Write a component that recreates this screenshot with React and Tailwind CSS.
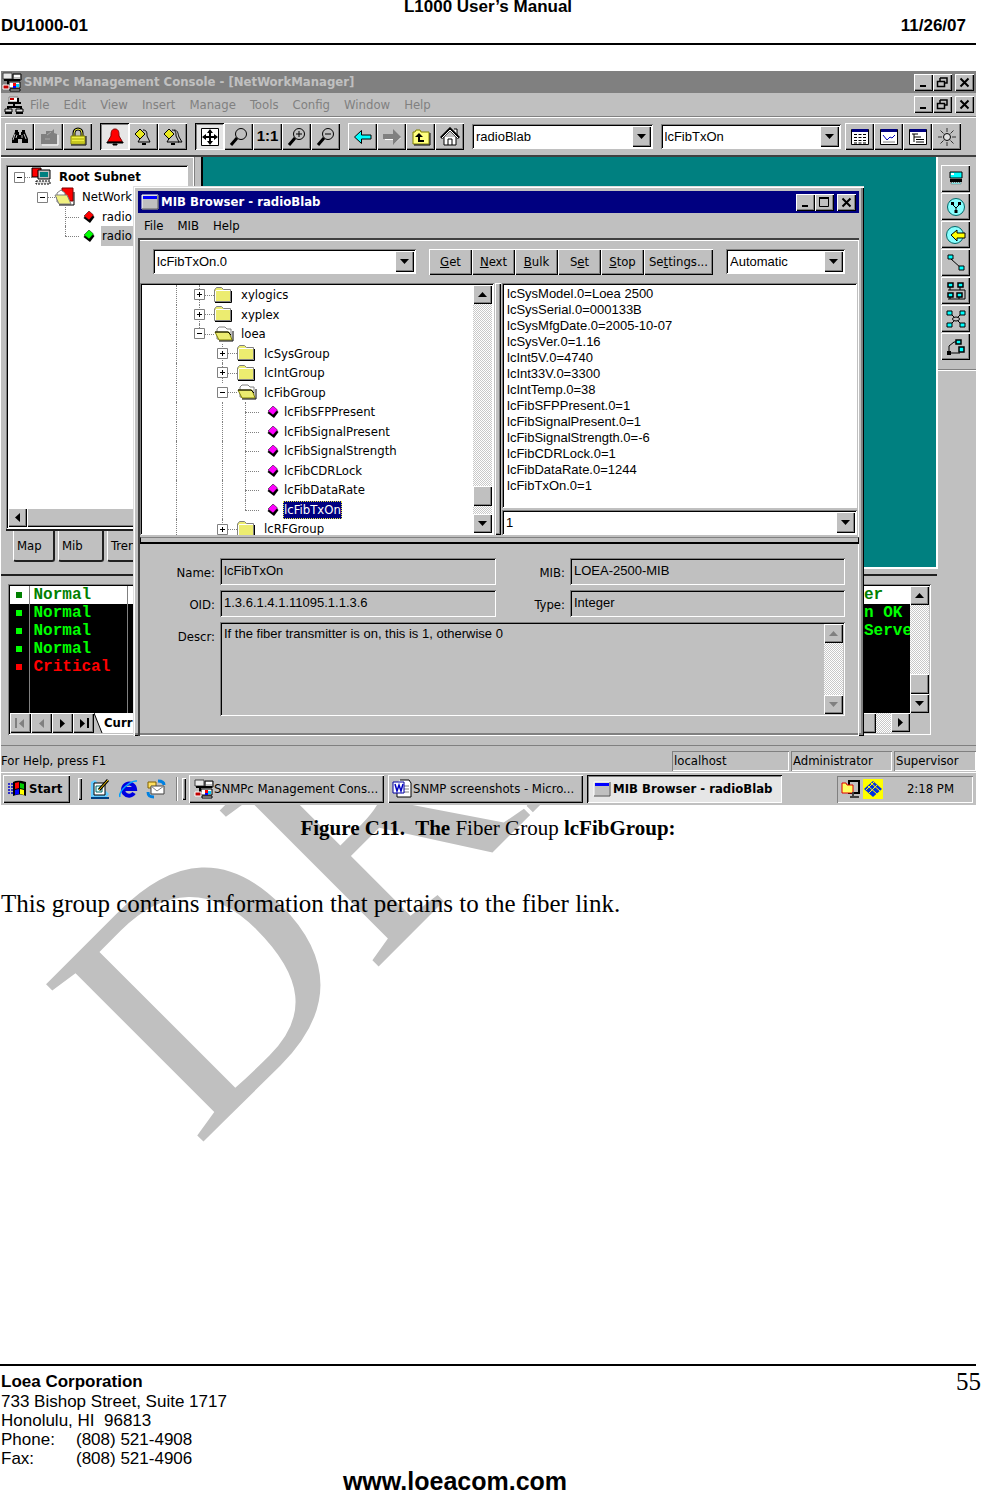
import React from 'react';

const UI = "font-['DejaVu_Sans_Condensed','Noto_Sans',sans-serif]";
const SANS = "font-['Liberation_Sans',Arial,sans-serif]";
const RAISED = 'bg-[#c0c0c0] shadow-[inset_1px_1px_0_#fff,inset_-1px_-1px_0_#000,inset_-2px_-2px_0_#808080]';
const SUNKEN = 'shadow-[inset_1px_1px_0_#808080,inset_-1px_-1px_0_#fff,inset_2px_2px_0_#000]';
const THIN_SUNKEN = 'shadow-[inset_1px_1px_0_#808080,inset_-1px_-1px_0_#fff]';
const PRESSED = 'bg-[#e6e6e6] shadow-[inset_1px_1px_0_#000,inset_-1px_-1px_0_#fff,inset_2px_2px_0_#808080]';
const TRACK = 'bg-[repeating-conic-gradient(#fff_0_25%,#c8c8c8_0_50%)] bg-[length:2px_2px]';

function Svg({ children, w = 20, h = 20, vb }) {
  return (
    <svg aria-hidden="true" width={w} height={h} viewBox={vb || `0 0 ${w} ${h}`} fill="none" className="block shrink-0">
      {children}
    </svg>
  );
}

/* ---------- icons ---------- */
const AppIcon = () => (
  <Svg>
    <path d="M1 1h9v6H1z" fill="#e8e8e8" stroke="#404040" />
    <path d="M11 2h8v6h-8z" fill="#c0c0c0" stroke="#000" />
    <path d="M12 3h6v2h-6z" fill="#fff" />
    <path d="M2 8h16M6 8v5" stroke="#000" strokeWidth="2" />
    <path d="M7 10h11v6H7z" fill="#fff" stroke="#000" />
    <path d="M11 11h3v3h-3z" fill="#f00" /><path d="M14 12h3v3h-3z" fill="#0cf" /><path d="M11 14h3v2h-3z" fill="#00f" />
    <path d="M1 13h6v4H1z" fill="#c00000" stroke="#fff" />
    <path d="M8 17h10v2H8z" fill="#ddd" stroke="#000" />
  </Svg>
);
const NetIcon = () => (
  <Svg>
    <path d="M5 2h9v5H5z" fill="#fff" stroke="#808080" />
    <path d="M4 8h13M10 8v5M4 14v-2h13v2" stroke="#000" strokeWidth="2" />
    <path d="M1 14h7v3H1zM12 14h7v3h-7z" fill="#ddd" stroke="#000" />
    <path d="M1 18h7M12 18h7M14 3v5" stroke="#000" strokeWidth="2" />
    <path d="M6 4h4" stroke="#c00000" strokeWidth="2" />
  </Svg>
);
const Binoc = () => (
  <Svg>
    <path d="M5 3h3v2h1v3h2V5h1V3h3v2l3 7v4h-6v-4H8v4H2v-4l3-7z" fill="#000" />
    <path d="M5 7l-2 6M7 8l-1 3M14 7l2 5M12 8v3" stroke="#c0c0c0" />
  </Svg>
);
const Discover = () => (
  <Svg><path d="M2 7h5V4h6l2-2v4l3 1v10H2z" fill="#808080" /><path d="M8 8l4-3M6 12h5" stroke="#a8a8a8" /><path d="M3 18h16V8" stroke="#fff" /></Svg>
);
const LockIcon = () => (
  <Svg>
    <path d="M6 9V6a4 4 0 0 1 8 0v3" stroke="#000" strokeWidth="3" /><path d="M6 9V6a4 4 0 0 1 8 0v3" stroke="#e8e840" />
    <path d="M3 9h14v8H3z" fill="#f0f040" stroke="#808000" /><path d="M4 12h12M4 15h12" stroke="#a0a000" /><path d="M3 18h15V9" stroke="#000" />
  </Svg>
);
const BELL = 'M10 2c-4 0-4 4-4 7l-3 5v1h14v-1l-3-5c0-3 0-7-4-7z';
const BellRed = () => (
  <Svg><path d={BELL} fill="#f00" stroke="#800000" /><path d="M2 15h16v1H2zM8 17h4v1H8z" fill="#000" stroke="#000" /></Svg>
);
const BellYellow = ({ two }) => (
  <Svg>
    {two && <path d="M11 3c4 0 4 4 5 7l3 5h-4" stroke="#000" />}
    <path d="M9 3c4 0 4 3 4 6l3 6H4l3-5" fill="#c0c0c0" stroke="#000" /><path d="M8 17h4" stroke="#000" strokeWidth="2" />
    <path d="M6 2l5 5-5 5-5-5z" fill="#e8e820" stroke="#000" />
  </Svg>
);
const Fit = () => (
  <Svg>
    <path d="M1.500 1.500h17v17h-17z" fill="#fff" stroke="#000" /><path d="M10 4v12M4 10h12" stroke="#000" strokeWidth="2" />
    <path d="M10 2l3 4H7zM10 18l3-4H7zM2 10l4-3v6zM18 10l-4-3v6z" fill="#000" />
  </Svg>
);
const Mag = ({ sign }) => (
  <Svg>
    <circle cx="12" cy="7" r="5.500" stroke="#000" /><path d="M8 11l-6 7" stroke="#000" strokeWidth="3" />
    {sign && <path d="M9 7h6" stroke="#000" />}{sign === '+' && <path d="M12 4v6" stroke="#000" />}
  </Svg>
);
const ArrowL = () => <Svg><path d="M1.500 10l7-6.500V8H18v4H8.500v4.500z" fill="#0ff" stroke="#000" /></Svg>;
const ArrowR = () => <Svg><path d="M19 11l-7-6v4H3v4h9v4z" fill="#fff" /><path d="M19 10l-8-8v5H1v5h10v6z" fill="#808080" /></Svg>;
const FolderUp = () => (
  <Svg><path d="M2 5h2l1-2h4l1 2h8v12H2z" fill="#ffff80" stroke="#808000" /><path d="M3 18h16V6" stroke="#000" /><path d="M13 14H8V9" stroke="#000" strokeWidth="2" /><path d="M8 6l4 4H4z" fill="#000" /></Svg>
);
const HomeIcon = () => (
  <Svg><path d="M4 10v8h12v-8" fill="#fff" stroke="#000" /><path d="M14 2h3v6" fill="#fff" stroke="#000" /><path d="M1 11l9-9 9 9" stroke="#000" strokeWidth="3" /><path d="M2 11l8-8 8 8" stroke="#fff" /><path d="M8 18v-6h4v6" stroke="#000" /></Svg>
);
const WinFrame = ({ children }) => (
  <Svg><path d="M1.500 2.500h17v15h-17z" fill="#fff" stroke="#000" /><path d="M2 2h16v3H2z" fill="#000080" />{children}</Svg>
);
const TableIcon = () => <WinFrame><path d="M4 7.500h3M8.500 7.500h3M13 7.500h3M4 10.500h3M8.500 10.500h3M13 10.500h3M4 13.500h3M8.500 13.500h3M13 13.500h3M4 16h3M8.500 16h3M13 16h3" stroke="#000" /></WinFrame>;
const GraphIcon = () => <WinFrame><path d="M4 8l4 5 3-3 2 1 3-3" stroke="#0000c0" /><path d="M4 15h12" stroke="#808080" /></WinFrame>;
const ListIcon = () => <WinFrame><path d="M4 7h6M6 10h7M8 12.500h8M8 15h8M6 7v8" stroke="#000" /></WinFrame>;
const SunIcon = () => (
  <Svg><circle cx="10" cy="10" r="3.500" fill="#e0e0e0" stroke="#000" /><path d="M10 1v4M10 15v4M1 10h4M15 10h4M3.500 3.500l3 3M13.500 13.500l3 3M16.500 3.500l-3 3M6.500 13.500l-3 3" stroke="#333" /></Svg>
);
const PcIcon = () => <Svg><path d="M4 3h12v6H4z" fill="#0ff" stroke="#000" /><path d="M5 4h3v2H5z" fill="#fff" /><path d="M4 10h12v3H4z" fill="#000" /><path d="M5 13.500h10v1.500H5z" fill="#8ff" stroke="#666" strokeDasharray="1 1" /></Svg>;
const Globe = () => <Svg><circle cx="10" cy="10" r="8.500" fill="#8ff" stroke="#066" /><path d="M5 5h3v3H5zM12 5h3v3h-3zM8.500 13h3v3h-3z" fill="#000" /><path d="M7 8l3 3 3-3M10 10v4" stroke="#000" /></Svg>;
const GlobeArrow = () => <Svg><circle cx="9" cy="10" r="8.500" fill="#8ff" stroke="#066" /><path d="M5 10l6-5v3h8v5h-8v3z" fill="#ff0" stroke="#000" /></Svg>;
const LinkIcon = () => <Svg><path d="M5 6l10 9" stroke="#000" /><path d="M2 2h5v4H2zM13 13h5v4h-5z" fill="#0ff" stroke="#000" /></Svg>;
const Bus = () => <Svg><path d="M4 6v3M14 6v3M2 9h17v9H2M4 15v3M13 15v3" stroke="#000" /><path d="M2 2h5v4H2zM12 2h5v4h-5zM2 12h5v4H2zM11 12h5v4h-5z" fill="#0ff" stroke="#000" strokeWidth="1.500" /></Svg>;
const Star = () => <Svg><path d="M4 4l12 12M16 4L4 16" stroke="#000" /><ellipse cx="10" cy="10" rx="3.500" ry="2" fill="#c0c0c0" stroke="#000" /><path d="M1 2h5v4H1zM14 2h5v4h-5zM1 14h5v4H1zM14 14h5v4h-5z" fill="#0ff" stroke="#000" /></Svg>;
const Ring = () => <Svg><path d="M3 16V9l5-4h5M4 16h10" stroke="#000" /><path d="M10 3h5v4h-5zM13 10h5v5h-5z" fill="#0ff" stroke="#000" strokeWidth="1.500" /><path d="M1 14h4v4H1z" fill="#000" /></Svg>;

const FolderClosed = () => (
  <Svg w={18} h={16}>
    <path d="M.5 14.500V3l2-2.500h5l2 2h7v12z" fill="#ecec70" stroke="#808080" /><path d="M2 3.500h14M1.500 4v10" stroke="#fff" /><path d="M1 15.500h16.500V4" stroke="#000" />
  </Svg>
);
const FolderOpen = () => (
  <Svg w={20} h={16}>
    <path d="M3 13V3l2-2h6l2 2h4v10z" fill="#fff" stroke="#808080" /><path d="M1 6h14l3 8H5z" fill="#ecec70" stroke="#808000" /><path d="M1 6h13l3 3M5 15h14V5" stroke="#000" />
  </Svg>
);
const Diamond = ({ color }) => (
  <Svg w={12} h={12}><path d="M6 1l5.500 5L7 12 .5 7z" fill="#000" /><path d="M6 0l4.500 4L6 9 1 5z" fill={color} stroke="#000" strokeWidth=".5" /></Svg>
);
const WindowIcon = () => (
  <Svg w={18} h={16}><path d="M1 1h16v14H1z" fill="#c0c0c0" stroke="#fff" /><path d="M2 2h14v3H2z" fill="#00f" /><path d="M1 15h16V1" stroke="#404040" /></Svg>
);
const Tri = ({ dir, color = '#000' }) => {
  const d = { down: 'M0 2h9l-4.500 5z', up: 'M0 7h9L4.500 2z', left: 'M7 0v9L2 4.500z', right: 'M2 0v9l5-4.500z' }[dir];
  return <Svg w={9} h={9}><path d={d} fill={color} /></Svg>;
};

/* ---------- controls ---------- */
function ToolButton({ label, pressed, children }) {
  return (
    <button type="button" aria-label={label} className={`flex h-[27px] w-[29px] items-center justify-center ${pressed ? PRESSED : RAISED}`}>
      {children}
    </button>
  );
}
function Combo({ label, value, className = '', font = SANS }) {
  return (
    <div className={`relative flex h-[25px] bg-white ${SUNKEN} ${className}`}>
      <select aria-label={label} className={`w-full appearance-none bg-transparent pl-1 text-[13px] text-black ${font}`}>
        <option>{value}</option>
      </select>
      <span className={`pointer-events-none absolute inset-y-[2px] right-[2px] flex w-[19px] items-center justify-center ${RAISED}`}>
        <Tri dir="down" />
      </span>
    </div>
  );
}
function CaptionButtons({ middle }) {
  const b = `flex h-[17px] w-[19px] items-center justify-center ${RAISED}`;
  return (
    <div className="ml-auto flex">
      <button type="button" aria-label="Minimize" className={b}><Svg w={13} h={11}><path d="M3 9h6" stroke="#000" strokeWidth="2" /></Svg></button>
      <button type="button" aria-label={middle} className={`mr-[3px] ${b}`}>
        {middle === 'Restore' ? (
          <Svg w={13} h={11}><path d="M4 1h7v5H9M4 1v3M1.500 4.500h7v5h-7z" stroke="#000" strokeWidth="1.500" /></Svg>
        ) : (
          <Svg w={13} h={11}><path d="M1.500 1.500h9v8h-9z" stroke="#000" /><path d="M1 1h10" stroke="#000" strokeWidth="2" /></Svg>
        )}
      </button>
      <button type="button" aria-label="Close" className={b}><Svg w={13} h={11}><path d="M2.500 1.500l8 8M10.500 1.500l-8 8" stroke="#000" strokeWidth="2" /></Svg></button>
    </div>
  );
}
function ScrollButton({ dir, label, muted }) {
  return (
    <button type="button" aria-label={label} className={`flex h-[19px] w-[19px] shrink-0 items-center justify-center ${RAISED}`}>
      <Tri dir={dir} color={muted ? '#808080' : '#000'} />
    </button>
  );
}
function VScroll({ thumb, gap, muted }) {
  return (
    <div className={`flex w-[19px] shrink-0 flex-col ${TRACK}`}>
      <ScrollButton dir="up" label="Scroll up" muted={muted} />
      <div className="flex-1" />
      {thumb && <div className={`h-[20px] ${RAISED}`} />}
      {gap && <div className="h-[8px]" />}
      <ScrollButton dir="down" label="Scroll down" muted={muted} />
    </div>
  );
}

/* ---------- trees ---------- */
function Guide({ kind }) {
  const v = 'absolute left-[11px] w-px border-l border-dotted border-[#808080]';
  const h = 'absolute top-1/2 border-t border-dotted border-[#808080]';
  const box = kind === '+' || kind === '-' || kind === 'm';
  return (
    <span className="relative h-full w-[23px] shrink-0">
      {(kind === '|' || kind === '+' || kind === 't') && <span className={`${v} inset-y-0`} />}
      {(kind === '-' || kind === 'l') && <span className={`${v} top-0 h-1/2`} />}
      {(kind === 't' || kind === 'l') && <span className={`${h} left-[11px] right-[-2px]`} />}
      {box && <span className={`${h} left-[17px] right-[-3px]`} />}
      {box && (
        <span className="absolute inset-0 flex items-center justify-center">
          <Svg w={11} h={11}>
            <path d="M.5.5h10v10H.5z" fill="#fff" stroke="#808080" /><path d="M3 5.500h5" stroke="#000" />
            {kind === '+' && <path d="M5.500 3v5" stroke="#000" />}
          </Svg>
        </span>
      )}
    </span>
  );
}
const mibTree = [
  ['|+', 'closed', 'xylogics'], ['|+', 'closed', 'xyplex'], ['|-', 'open', 'loea'],
  ['| +', 'closed', 'lcSysGroup'], ['| +', 'closed', 'lcIntGroup'], ['| +', 'open', 'lcFibGroup'],
  ['| |t', 'leaf', 'lcFibSFPPresent'], ['| |t', 'leaf', 'lcFibSignalPresent'], ['| |t', 'leaf', 'lcFibSignalStrength'],
  ['| |t', 'leaf', 'lcFibCDRLock'], ['| |t', 'leaf', 'lcFibDataRate'], ['| |l', 'leaf', 'lcFibTxOn', true],
  ['| +', 'closed', 'lcRFGroup'],
];
function MibRow({ row }) {
  const [guides, icon, name, selected] = row;
  const marks = [...guides].map((g, i) => (icon === 'open' && g === '+' ? (i === 2 ? 'm' : '-') : g));
  return (
    <li className="flex items-center">
      {marks.map((g, i) => <Guide key={i} kind={g} />)}
      {icon === 'leaf' ? (
        <span className="flex w-[26px] shrink-0 justify-end pr-1"><Diamond color="#f0f" /></span>
      ) : (
        <span className="flex w-[29px] shrink-0 pl-[3px]">{icon === 'open' ? <FolderOpen /> : <FolderClosed />}</span>
      )}
      <span className={selected ? 'bg-[#000080] px-px leading-[18px] text-white outline-1 -outline-offset-1 outline-dotted outline-[#e8e840]' : 'px-px'}>{name}</span>
    </li>
  );
}

const values = [
  'lcSysModel.0=Loea 2500', 'lcSysSerial.0=000133B', 'lcSysMfgDate.0=2005-10-07', 'lcSysVer.0=1.16', 'lcInt5V.0=4740',
  'lcInt33V.0=3300', 'lcIntTemp.0=38', 'lcFibSFPPresent.0=1', 'lcFibSignalPresent.0=1', 'lcFibSignalStrength.0=-6',
  'lcFibCDRLock.0=1', 'lcFibDataRate.0=1244', 'lcFibTxOn.0=1',
];
const verbs = [['', 'G', 'et'], ['', 'N', 'ext'], ['', 'B', 'ulk'], ['S', 'e', 't'], ['', 'S', 'top'], ['Se', 't', 'tings...']];

function Field({ id, label, value, labelWidth }) {
  return (
    <div className="flex h-[27px]">
      <label htmlFor={id} className={`${labelWidth} shrink-0 pr-[5px] pt-[6px] text-right text-[13px] leading-[18px] ${UI}`}>{label}</label>
      <input id={id} readOnly value={value} className={`h-[27px] w-full min-w-0 flex-1 px-1 pb-[3px] text-[13px] ${SANS} ${SUNKEN}`} />
    </div>
  );
}

function MibBrowser() {
  return (
    <section aria-label="MIB Browser" className="absolute bottom-[69px] left-[132px] right-[112px] top-[115px] flex flex-col bg-[#c0c0c0] px-[5px] pt-[5px] shadow-[inset_1px_1px_0_#dfdfdf,inset_2px_2px_0_#fff,inset_-1px_-1px_0_#000,inset_-3px_-3px_0_#808080]">
      <div className="flex h-[22px] items-center gap-[2px] bg-[#000080] pl-[3px] pr-[3px]">
        <WindowIcon />
        <h2 className={`text-[13px] font-bold text-white ${UI}`}>MIB Browser - radioBlab</h2>
        <CaptionButtons middle="Maximize" />
      </div>
      <nav className={`flex h-[25px] items-center gap-[14px] pl-[6px] text-[13px] ${UI}`}>
        {['File', 'MIB', 'Help'].map((m) => <button type="button" key={m}>{m}</button>)}
      </nav>
      <div className="flex flex-1 flex-col border-l-2 border-t-2 border-[#404040] pb-[5px] shadow-[inset_0_1px_0_#fff,inset_-1px_-1px_0_#fff]">
        <div className="flex h-[43px] items-center gap-[13px] pl-[13px] pr-[14px]">
          <Combo label="Variable" value="lcFibTxOn.0" className="flex-1" />
          <div className="flex">
            {verbs.map(([a, u, b]) => (
              <button type="button" key={a + u + b} className={`h-[26px] text-[13px] ${UI} ${RAISED} ${b === 'tings...' ? 'w-[69px]' : 'w-[43px]'}`}>{a}<u>{u}</u>{b}</button>
            ))}
          </div>
          <Combo label="Format" value="Automatic" className="w-[119px]" />
        </div>
        <div className="flex h-[252px] pr-[2px]">
          <div className={`flex w-[354px] overflow-hidden bg-white p-[2px] ${SUNKEN}`}>
            <ul className={`grid h-[254px] flex-1 auto-rows-fr pl-[23px] text-[13px] ${UI}`}>
              {mibTree.map((r) => <MibRow key={r[2]} row={r} />)}
            </ul>
            <VScroll thumb gap />
          </div>
          <div className={`mx-px w-[6px] ${RAISED}`} />
          <div className="flex flex-1 flex-col gap-[2px]">
            <ul className={`flex-1 bg-white pl-[5px] pt-[3px] text-[13px] leading-[16px] ${SANS} ${SUNKEN}`}>
              {values.map((v) => <li key={v}>{v}</li>)}
            </ul>
            <Combo label="Value" value="1" />
          </div>
        </div>
        <div className="mb-[14px] mt-[2px] h-[7px] border border-b-2 border-black border-t-[#808080] bg-[#c0c0c0]" />
        <div className="flex flex-col gap-[5px] pr-[14px]">
          <div className="grid grid-cols-[355fr_348fr]">
            <Field id="f-name" label="Name:" value="lcFibTxOn" labelWidth="w-[80px]" />
            <Field id="f-mib" label="MIB:" value="LOEA-2500-MIB" labelWidth="w-[74px]" />
          </div>
          <div className="grid grid-cols-[355fr_348fr]">
            <Field id="f-oid" label="OID:" value="1.3.6.1.4.1.11095.1.1.3.6" labelWidth="w-[80px]" />
            <Field id="f-type" label="Type:" value="Integer" labelWidth="w-[74px]" />
          </div>
          <div className="flex h-[94px]">
            <label htmlFor="f-descr" className={`w-[80px] shrink-0 pr-[5px] pt-[6px] text-right text-[13px] leading-[18px] ${UI}`}>Descr:</label>
            <div className={`flex flex-1 p-[2px] ${SUNKEN}`}>
              <textarea id="f-descr" readOnly value="If the fiber transmitter is on, this is 1, otherwise 0" className={`flex-1 resize-none overflow-hidden px-[2px] text-[13px] leading-[20px] ${SANS}`} />
              <VScroll muted />
            </div>
          </div>
        </div>
      </div>
    </section>
  );
}

const log = [
  ['Normal', 'er', 'bg-white text-[#008000]'], ['Normal', 'n OK', 'text-[#00ff00]'], ['Normal', 'Serve', 'text-[#00ff00]'],
  ['Normal', '', 'text-[#00ff00]'], ['Critical', '', 'text-[#ff0000]'],
];

function Console() {
  return (
    <div className="relative ml-px bg-[#c0c0c0] text-black">
      <div className="flex h-[22px] items-center bg-[#808080] pl-px pr-[2px]">
        <AppIcon />
        <h1 className={`ml-[2px] text-[13px] font-bold text-[#c0c0c0] ${UI}`}>SNMPc Management Console - [NetWorkManager]</h1>
        <CaptionButtons middle="Restore" />
      </div>
      <div className="flex h-[24px] items-center border-b border-[#808080] pl-[3px] pr-[2px]">
        <NetIcon />
        <nav className={`flex gap-[14px] pl-[6px] text-[13px] text-[#808080] ${UI}`}>
          {['File', 'Edit', 'View', 'Insert', 'Manage', 'Tools', 'Config', 'Window', 'Help'].map((m) => <button type="button" key={m}>{m}</button>)}
        </nav>
        <CaptionButtons middle="Restore" />
      </div>
      <div className="flex h-[38px] items-center gap-2 border-t border-white pl-1 pr-[15px]">
        <div className="flex"><ToolButton label="Find"><Binoc /></ToolButton><ToolButton label="Discover"><Discover /></ToolButton><ToolButton label="Lock"><LockIcon /></ToolButton></div>
        <div className="flex"><ToolButton label="Alarms" pressed><BellRed /></ToolButton><ToolButton label="Acknowledge"><BellYellow /></ToolButton><ToolButton label="Acknowledge all"><BellYellow two /></ToolButton></div>
        <div className="flex">
          <ToolButton label="Fit" pressed><Fit /></ToolButton><ToolButton label="Zoom"><Mag /></ToolButton>
          <ToolButton label="Actual size"><b className={`text-[15px] ${SANS}`}>1:1</b></ToolButton>
          <ToolButton label="Zoom in"><Mag sign="+" /></ToolButton><ToolButton label="Zoom out"><Mag sign="-" /></ToolButton>
        </div>
        <div className="flex"><ToolButton label="Back"><ArrowL /></ToolButton><ToolButton label="Forward"><ArrowR /></ToolButton><ToolButton label="Parent"><FolderUp /></ToolButton><ToolButton label="Home"><HomeIcon /></ToolButton></div>
        <Combo label="Node" value="radioBlab" className="flex-1" />
        <Combo label="Table" value="lcFibTxOn" className="flex-1" />
        <div className="-ml-1 flex"><ToolButton label="Table view"><TableIcon /></ToolButton><ToolButton label="Graph view"><GraphIcon /></ToolButton><ToolButton label="List view"><ListIcon /></ToolButton><ToolButton label="Poll"><SunIcon /></ToolButton></div>
      </div>

      <div className="flex h-[414px] border-t-2 border-[#404040]">
        <div className="flex w-[193px] flex-col pl-[5px] pr-[6px] pt-[8px] shadow-[inset_0_1px_0_#fff,inset_-1px_0_0_#fff]">
          <div className={`flex h-[364px] flex-col bg-white p-[2px] ${SUNKEN}`}>
            <ul className={`flex-1 text-[13px] leading-[20px] ${UI}`}>
              <li className="flex h-5 items-center font-bold">
                <Guide kind="m" />
                <Svg w={22}><path d="M1 1h9v9H1z" fill="#f00" stroke="#000" /><path d="M7 3h12v9H7z" fill="#c0c0c0" stroke="#000" /><path d="M9 5h8v5H9z" fill="#008080" /><path d="M5 14h14v3H5z" fill="#ddd" stroke="#000" strokeDasharray="2 1" /></Svg>
                <span className="pl-[6px]">Root Subnet</span>
              </li>
              <li className="flex h-5 items-center pl-[23px]">
                <Guide kind="m" />
                <Svg w={22}><path d="M8 1h11v13H8z" fill="#f00" stroke="#800000" /><path d="M3 6l4-3 4 3v9H3z" fill="#fff" stroke="#808080" /><path d="M1 8h12l4 9H5z" fill="#f0f080" stroke="#808080" /><path d="M5 18h15V5" stroke="#000" /></Svg>
                <span className="pl-[6px]">NetWork</span>
              </li>
              <li className="flex h-[19px] items-center gap-[6px] pl-[46px]"><Guide kind="t" /><Diamond color="#f00" /><span className="px-px">radio</span></li>
              <li className="flex h-5 items-center gap-[6px] pl-[46px]"><Guide kind="l" /><Diamond color="#0f0" /><span className="flex-1 bg-[#c0c0c0] px-px">radio</span></li>
            </ul>
            <div className={`flex ${TRACK}`}><ScrollButton dir="left" label="Scroll left" /><div className={`flex-1 ${RAISED}`} /></div>
          </div>
          <div className={`flex gap-[3px] border-t-2 border-[#202020] pl-[7px] text-[13px] ${UI}`}>
            {[['Map', 'w-[42px]'], ['Mib', 'w-[46px]'], ['Tren', 'w-[50px]']].map(([t, w]) => (
              <button type="button" key={t} className={`h-[31px] rounded-b-[3px] border-b-2 border-l border-r-2 border-[#202020] border-l-white pl-[3px] text-left ${w}`}>{t}</button>
            ))}
          </div>
        </div>
        <div className="w-[7px] border-l border-[#808080]" />
        <div className="flex-1 border-b-2 border-l-2 border-b-white border-l-black bg-[#008080]" />
        <div className="w-[40px] border-l-2 border-white pl-[3px] pt-[8px]">
          <div className="flex flex-col gap-px">
            {[['Device', PcIcon], ['Network', Globe], ['Goto', GlobeArrow], ['Link', LinkIcon], ['Bus', Bus], ['Star', Star], ['Ring', Ring]].map(([l, I]) => (
              <ToolButton key={l} label={l}><I /></ToolButton>
            ))}
          </div>
          <div className="-ml-[3px] mt-[9px] border-b border-t border-b-white border-t-[#808080]" />
        </div>
      </div>

      <div className="mr-[39px] mt-[5px] h-[2px] bg-[#202020]" />
      <div className={`ml-[7px] mr-[45px] mt-[8px] flex h-[151px] flex-col p-[2px] ${SUNKEN}`}>
        <div className="flex h-[127px] bg-black">
          <div className="flex-1 overflow-hidden">
            <table className="w-full table-fixed border-collapse font-['Liberation_Mono','Courier_New',monospace] text-[16px] font-bold leading-[18px]">
              <tbody>
                {log.map(([level, tail, cls], i) => (
                  <tr key={i} className={cls}>
                    <td className="h-[18px] w-[19px] border-r border-[#808080] p-0"><span className="mx-auto block h-[6px] w-[6px] bg-current" /></td>
                    <td className="w-[98px] border-r border-[#808080] p-0 pl-[4px]">{level}</td>
                    <td className="p-0" />
                    <td className="w-[46px] whitespace-nowrap p-0">{tail}</td>
                  </tr>
                ))}
                <tr aria-hidden="true">
                  <td className="h-[37px] border-r border-[#808080]" />
                  <td className="border-r border-[#808080]" />
                  <td colSpan={2} />
                </tr>
              </tbody>
            </table>
          </div>
          <VScroll thumb />
        </div>
        <div className="flex h-[20px]">
          {[['First', 'left', 1, 1], ['Previous', 'left', 0, 1], ['Next', 'right', 0, 0], ['Last', 'right', 1, 0]].map(([l, dir, bar, off]) => (
            <button type="button" aria-label={l} key={l} className={`flex w-[21px] items-center justify-center ${RAISED}`}>
              {bar === 1 && dir === 'left' && <span className="h-[10px] w-[2px] bg-[#808080]" />}
              <Tri dir={dir} color={off ? '#808080' : '#000'} />
              {bar === 1 && dir === 'right' && <span className="h-[10px] w-[2px] bg-black" />}
            </button>
          ))}
          <Svg w={10} h={20}><path d="M0 0h10v20H8z" fill="#fff" /><path d="M0 0l8 20" stroke="#000" /></Svg>
          <span className={`bg-white pr-4 text-[13px] font-bold leading-[19px] ${UI}`}>Curr</span>
          <div className={`flex-1 ${RAISED}`} />
          <div className={`w-[15px] ${TRACK}`} />
          <ScrollButton dir="right" label="Scroll right" />
          <div className="w-[19px]" />
        </div>
      </div>

      <footer className={`mt-[10px] flex h-[27px] items-center gap-[2px] border-t border-[#808080] pt-[3px] text-[13px] ${UI}`}>
        <span className="flex-1">For Help, press F1</span>
        <span className={`h-[20px] w-[117px] pl-[2px] leading-[20px] ${THIN_SUNKEN}`}>localhost</span>
        <span className={`h-[20px] w-[101px] pl-[2px] leading-[20px] ${THIN_SUNKEN}`}>Administrator</span>
        <span className={`h-[20px] w-[82px] pl-[2px] leading-[20px] ${THIN_SUNKEN}`}>Supervisor</span>
      </footer>

      <div className={`flex h-[33px] items-center border-t border-white pl-[2px] pr-[3px] text-[13px] ${UI}`}>
        <button type="button" className={`flex h-[28px] w-[67px] items-center gap-[2px] pl-[4px] font-bold ${RAISED}`}>
          <Svg>
            <path d="M1 5h5M1 8h5M1 11h5M1 14h5" stroke="#00c" strokeWidth="1.500" strokeDasharray="2 1" />
            <path d="M6 3c4-2 8-1 13 0v14c-5-2-9-2-13 0z" fill="#000" />
            <path d="M8 4l4-1v6l-4 1z" fill="#f00" /><path d="M13 4l4 1v5l-4-1z" fill="#0c0" /><path d="M8 11l4-1v5l-4 1z" fill="#00f" /><path d="M13 10l4 1v5l-4-1z" fill="#ff0" />
          </Svg>
          Start
        </button>
        <span className={`ml-2 h-[22px] w-[4px] ${RAISED}`} />
        <div className="flex gap-[8px] pl-[8px]">
          <button type="button" aria-label="Desktop"><Svg><path d="M1 3l4-2 14 14-3 4H1z" fill="#6cf" /><path d="M4 4h11v12H4z" fill="#fff" stroke="#000" /><path d="M6 7h6v6H6z" fill="#dff" stroke="#066" /><path d="M18 1l-9 10" stroke="#000" strokeWidth="3" /><path d="M18 1l-9 10" stroke="#fc0" /><path d="M1 19h18" stroke="#004080" strokeWidth="2" /></Svg></button>
          <button type="button" aria-label="Internet Explorer"><Svg><path d="M16 14a6 6 0 1 1 1-4H5" stroke="#0000e0" strokeWidth="4" /><path d="M2 18C0 13 12 1 19 2" stroke="#00a0ff" strokeWidth="1.500" /></Svg></button>
          <button type="button" aria-label="Outlook Express"><Svg><path d="M2 3h8v6H2z" fill="#ffe060" stroke="#806000" /><path d="M5 7h13v8H5z" fill="#fff" stroke="#404040" /><path d="M5 7l6 5 7-5" stroke="#808080" /><path d="M12 2c5 0 6 2 6 4M8 18c-5 0-6-2-6-5" stroke="#0080e0" strokeWidth="3" /></Svg></button>
        </div>
        <span className="ml-[10px] h-[24px] w-[2px] border-l border-[#808080] bg-white" />
        <span className={`ml-[4px] h-[22px] w-[4px] ${RAISED}`} />
        <div className="ml-[3px] flex flex-1 gap-[4px]">
          <button type="button" className={`flex h-[28px] w-[195px] items-center whitespace-nowrap pl-[5px] ${RAISED}`}><AppIcon />SNMPc Management Cons...</button>
          <button type="button" className={`flex h-[28px] w-[195px] items-center gap-px whitespace-nowrap pl-[4px] ${RAISED}`}>
            <Svg><path d="M8 1h9l2 3v14H5V4" fill="#fff" stroke="#000" /><path d="M9 7h8M9 10h8M9 13h8" stroke="#808080" /><path d="M1 3h11v11H1z" fill="#fff" stroke="#0000a0" /><path d="M3 5l2 7 2-6 2 6 2-7" stroke="#0000c0" strokeWidth="1.500" /></Svg>
            SNMP screenshots - Micro...
          </button>
          <button type="button" className={`flex h-[28px] w-[195px] items-center gap-[2px] whitespace-nowrap pl-[6px] font-bold ${PRESSED}`}><WindowIcon />MIB Browser - radioBlab</button>
        </div>
        <div className={`flex h-[27px] w-[136px] items-center gap-[2px] pl-[4px] ${THIN_SUNKEN}`}>
          <Svg><path d="M8 2h10v12H8z" fill="#c0c0c0" stroke="#000" strokeWidth="2" /><path d="M1 4h4l1 2h6v8H1z" fill="#ffff60" stroke="#e00000" /><path d="M12 13v5M9 18h9" stroke="#404040" strokeWidth="2" /></Svg>
          <Svg><path d="M0 0h20v20H0z" fill="#ff0" /><path d="M10 2l9 8-9 8-9-8z" fill="#0030e0" /><path d="M5 7l9 8M8 4l9 8M6 14l8-8M3 11l8-8" stroke="#ff0" /></Svg>
          <time className="ml-auto pr-[19px]">2:18 PM</time>
        </div>
      </div>

      <MibBrowser />
    </div>
  );
}

export default function App() {
  return (
    <div className="relative flex min-h-screen flex-col overflow-hidden bg-white text-black">
      <div aria-hidden="true" className="absolute inset-y-0 left-0 right-[5px] overflow-hidden">
        <span className="absolute left-[222px] top-[874px] origin-bottom-left -rotate-45 font-['Liberation_Serif','Times_New_Roman',serif] text-[340px] leading-[300px] text-[#c0c0c0]">DRAFT</span>
      </div>
      <div className="relative flex flex-1 flex-col">
        <header className={`mr-[5px] border-b-2 border-black pb-[5px] text-[17px] font-bold ${SANS}`}>
          <p className="text-center leading-[14px]">L1000 User’s Manual</p>
          <div className="flex justify-between pl-px pr-[10px] leading-[24px]"><span>DU1000-01</span><span>11/26/07</span></div>
        </header>
        <main className="font-['Liberation_Serif','Times_New_Roman',serif]">
          <figure className="mr-[5px] mt-[26px]">
            <Console />
            <figcaption className="mt-[11px] whitespace-pre text-center text-[21px] leading-[24px]"><b>Figure C11.  The </b>Fiber Group <b>lcFibGroup:</b></figcaption>
          </figure>
          <p className="mt-[48px] pl-px text-[25px] leading-[32px]">This group contains information that pertains to the fiber link.</p>
        </main>
        <footer className={`mt-auto text-[17px] leading-[19px] ${SANS}`}>
          <div className="mr-[5px] h-[2px] bg-black" />
          <div className="flex justify-between pt-[6px]">
            <address className="pl-px not-italic">
              <b className="block leading-[20px]">Loea Corporation</b>
              <div>733 Bishop Street, Suite 1717</div>
              <div className="whitespace-pre">Honolulu, HI  96813</div>
              <div className="flex"><span className="w-[75px]">Phone:</span>(808) 521-4908</div>
              <div className="flex"><span className="w-[75px]">Fax:</span>(808) 521-4906</div>
            </address>
            <span className="font-['Liberation_Serif','Times_New_Roman',serif] text-[25px]">55</span>
          </div>
          <a href="http://www.loeacom.com" className="mr-[71px] mt-[3px] block text-center text-[25px] font-bold leading-[20px]">www.loeacom.com</a>
        </footer>
      </div>
    </div>
  );
}
